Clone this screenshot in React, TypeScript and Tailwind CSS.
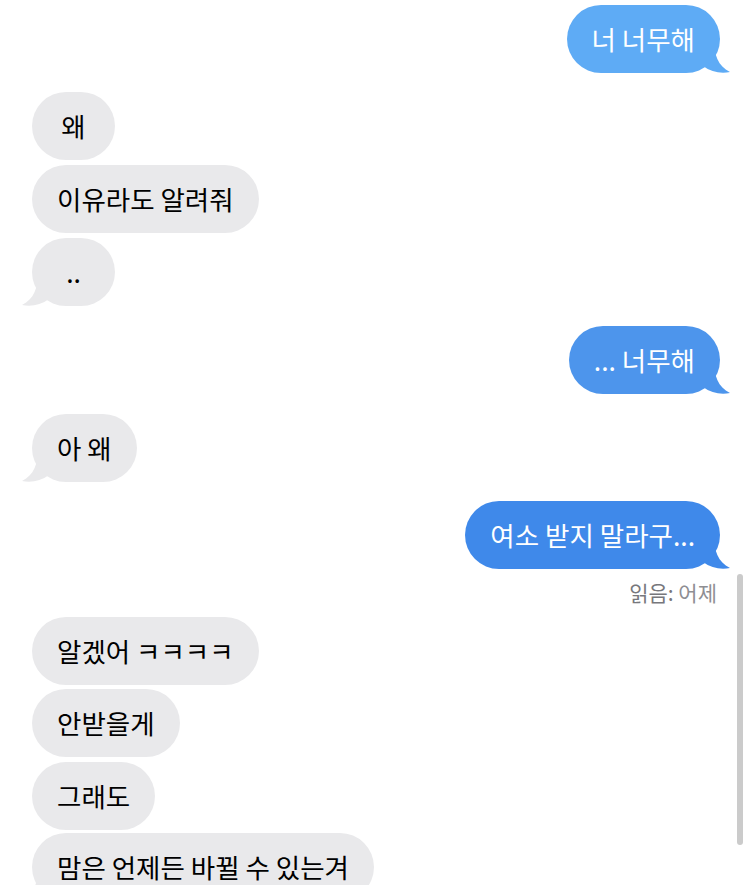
import React from 'react';

type Msg = {
  text: string;
  me: boolean;
  tail?: boolean;
  bg?: string;
  mt: string;
};

const messages: Msg[] = [
  { text: '너 너무해', me: true, tail: true, bg: '#5eabf5', mt: 'mt-[5px]' },
  { text: '왜', me: false, mt: 'mt-[19px]' },
  { text: '이유라도 알려줘', me: false, mt: 'mt-[5px]' },
  { text: '..', me: false, tail: true, mt: 'mt-[5px]' },
  { text: '... 너무해', me: true, tail: true, bg: '#4d95ec', mt: 'mt-[20px]' },
  { text: '아 왜', me: false, tail: true, mt: 'mt-[20px]' },
  { text: '여소 받지 말라구...', me: true, tail: true, bg: '#3f89ea', mt: 'mt-[19px]' },
];

const later: Msg[] = [
  { text: '알겠어 ㅋㅋㅋㅋ', me: false, mt: 'mt-[10px]' },
  { text: '안받을게', me: false, mt: 'mt-[4px]' },
  { text: '그래도', me: false, mt: 'mt-[5px]' },
  { text: '맘은 언제든 바뀔 수 있는겨', me: false, tail: true, mt: 'mt-[3px]' },
];

const Tail: React.FC<{ me: boolean; color: string }> = ({ me, color }) => (
  <svg
    width="30"
    height="34"
    viewBox="0 0 30 34"
    className={`absolute bottom-0 ${me ? '-right-[10px]' : '-left-[10px] -scale-x-100'}`}
  >
    <path d="M4 0 H14 C14 16 18 27 30 33 C21 35 11 33 3 27 Z" fill={color} />
  </svg>
);

const Bubble: React.FC<{ m: Msg }> = ({ m }) => {
  const color = m.me ? m.bg ?? '#4d95ec' : '#e9e9eb';
  return (
    <div className={`flex ${m.me ? 'justify-end' : 'justify-start'} ${m.mt}`}>
      <div className="relative">
        {m.tail && <Tail me={m.me} color={color} />}
        <div
          className={`relative h-[68px] min-w-[83px] rounded-[34px] px-[25px] flex items-center justify-center text-[26.5px] whitespace-nowrap ${
            m.me ? 'text-white' : 'text-black'
          }`}
          style={{ backgroundColor: color }}
        >
          {m.text}
        </div>
      </div>
    </div>
  );
};

export default function App() {
  return (
    <div
      className="relative w-[750px] h-[885px] overflow-hidden bg-white"
      style={{ fontFamily: '"Noto Sans CJK KR", "Noto Sans", sans-serif' }}
    >
      <div className="pl-[32px] pr-[30px]">
        {messages.map((m, i) => (
          <Bubble key={i} m={m} />
        ))}
        <div className="mt-[8px] text-right pr-[3px] text-[21px] leading-[30px] text-[#8e8e93]">
          <span className="text-[#77777c]">읽음:</span> 어제
        </div>
        {later.map((m, i) => (
          <Bubble key={i} m={m} />
        ))}
      </div>

      {/* scroll indicator */}
      <div className="absolute left-[737px] top-[574px] w-[6px] h-[271px] rounded-full bg-[#cbcbcb]" />
    </div>
  );
}
